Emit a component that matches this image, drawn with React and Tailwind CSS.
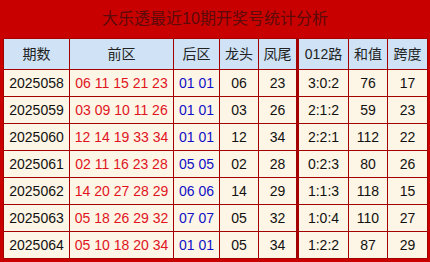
import React from "react";

const rows = [
  ["2025058", "06 11 15 21 23", "01 01", "06", "23", "3:0:2", "76", "17"],
  ["2025059", "03 09 10 11 26", "01 01", "03", "26", "2:1:2", "59", "23"],
  ["2025060", "12 14 19 33 34", "01 01", "12", "34", "2:2:1", "112", "22"],
  ["2025061", "02 11 16 23 28", "05 05", "02", "28", "0:2:3", "80", "26"],
  ["2025062", "14 20 27 28 29", "06 06", "14", "29", "1:1:3", "118", "15"],
  ["2025063", "05 18 26 29 32", "07 07", "05", "32", "1:0:4", "110", "27"],
  ["2025064", "05 10 18 20 34", "01 01", "05", "34", "1:2:2", "87", "29"],
];

const heads = ["期数", "前区", "后区", "龙头", "凤尾", "012路", "和值", "跨度"];
const widths = [66, 104, 46, 39, 39, 51, 39, 40];

export default function App() {
  return (
    <div
      className="w-[430px] h-[262px] bg-[#c80000] px-[3px] pb-[4px]"
      style={{ fontFamily: '"Liberation Sans", "Noto Sans CJK SC", sans-serif' }}
    >
      <div className="h-[38px] flex items-center justify-center text-[16px] text-[#5c0a0a]">
        大乐透最近10期开奖号统计分析
      </div>
      <table className="table-fixed border-collapse w-[424px] text-[14px]">
        <colgroup>
          {widths.map((w, i) => (
            <col key={i} style={{ width: w }} />
          ))}
        </colgroup>
        <thead>
          <tr className="h-[31px] bg-[#cfe2f6] text-[#222]">
            {heads.map((h, i) => (
              <th
                key={h}
                className={
                  "font-normal text-center border border-[#a30000] p-0" +
                  (i === 5 ? " border-l-[3px]" : "")
                }
              >
                {h}
              </th>
            ))}
          </tr>
        </thead>
        <tbody>
          {rows.map((r) => (
            <tr key={r[0]} className="h-[27px] bg-[#fdf5e5] text-[#111]">
              {r.map((c, i) => (
                <td
                  key={i}
                  className={
                    "text-center border border-[#a30000] p-0 whitespace-nowrap" +
                    (i === 1 ? " text-[#e0141e]" : "") +
                    (i === 2 ? " text-[#1010c8]" : "") +
                    (i === 5 ? " border-l-[3px]" : "")
                  }
                >
                  {c}
                </td>
              ))}
            </tr>
          ))}
        </tbody>
      </table>
    </div>
  );
}
